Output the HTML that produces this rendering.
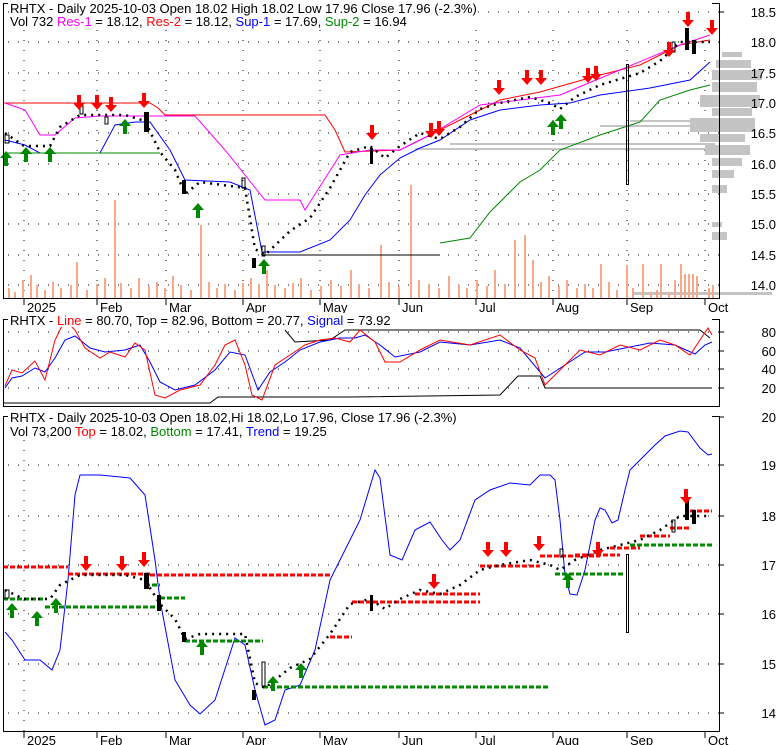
<!DOCTYPE html>
<html><head><meta charset="utf-8"><style>
html,body{margin:0;padding:0;background:#fff;width:780px;height:745px;overflow:hidden}
svg{display:block;font-family:"Liberation Sans",Arial,sans-serif}
</style></head><body>
<svg width="780" height="745" viewBox="0 0 780 745" xmlns="http://www.w3.org/2000/svg">
<defs>
<symbol id="dn" viewBox="0 0 12 16" overflow="visible"><path d="M4 0H8V8H12L6 15L0 8H4Z" fill="#f00"/></symbol>
<symbol id="up" viewBox="0 0 12 16" overflow="visible"><path d="M4 16H8V8H12L6 1L0 8H4Z" fill="#080"/></symbol>
</defs>
<g font-size="13" fill="#000">
<g stroke="#000" stroke-dasharray="1,9" stroke-width="1">
<line x1="8" y1="12" x2="719" y2="12"/><line x1="8" y1="42" x2="719" y2="42"/><line x1="8" y1="73" x2="719" y2="73"/><line x1="8" y1="103" x2="719" y2="103"/><line x1="8" y1="133" x2="719" y2="133"/><line x1="8" y1="164" x2="719" y2="164"/><line x1="8" y1="194" x2="719" y2="194"/><line x1="8" y1="224" x2="719" y2="224"/><line x1="8" y1="255" x2="719" y2="255"/><line x1="8" y1="285" x2="719" y2="285"/>
<line x1="24" y1="30" x2="24" y2="298"/><line x1="97" y1="30" x2="97" y2="298"/><line x1="166" y1="30" x2="166" y2="298"/><line x1="243" y1="30" x2="243" y2="298"/><line x1="320" y1="30" x2="320" y2="298"/><line x1="399" y1="30" x2="399" y2="298"/><line x1="476" y1="30" x2="476" y2="298"/><line x1="553" y1="30" x2="553" y2="298"/><line x1="627" y1="30" x2="627" y2="298"/><line x1="705" y1="30" x2="705" y2="298"/>
</g>
<g fill="#c4c4c4">
<rect x="722" y="52" width="20" height="5"/><rect x="716" y="60" width="35" height="8"/><rect x="712" y="70" width="50" height="10"/><rect x="712" y="82" width="45" height="10"/><rect x="700" y="95" width="60" height="12"/><rect x="712" y="108" width="40" height="8"/><rect x="690" y="118" width="65" height="14"/><rect x="700" y="134" width="45" height="8"/><rect x="705" y="145" width="45" height="10"/><rect x="712" y="158" width="30" height="8"/><rect x="712" y="170" width="22" height="8"/><rect x="712" y="185" width="15" height="8"/>
<rect x="712" y="222" width="10" height="5"/><rect x="712" y="232" width="15" height="8"/>
<rect x="415" y="148" width="300" height="2"/><rect x="450" y="143" width="265" height="2"/><rect x="600" y="125" width="115" height="2"/><rect x="630" y="120" width="85" height="2"/>
<rect x="632" y="292" width="140" height="3"/>
</g>
<g fill="#f7a98a">
<rect x="8" y="288" width="2" height="10"/><rect x="14" y="292" width="2" height="6"/><rect x="22" y="280" width="2" height="18"/><rect x="30" y="275" width="2" height="23"/><rect x="36" y="285" width="2" height="13"/><rect x="44" y="290" width="2" height="8"/><rect x="52" y="282" width="2" height="16"/><rect x="60" y="288" width="2" height="10"/><rect x="70" y="285" width="2" height="13"/><rect x="76" y="262" width="2" height="36"/><rect x="86" y="290" width="2" height="8"/><rect x="96" y="284" width="2" height="14"/><rect x="104" y="278" width="2" height="20"/><rect x="114" y="200" width="2" height="98"/><rect x="120" y="283" width="2" height="15"/><rect x="130" y="288" width="2" height="10"/><rect x="138" y="278" width="2" height="20"/><rect x="148" y="286" width="2" height="12"/><rect x="156" y="282" width="2" height="16"/><rect x="164" y="288" width="2" height="10"/><rect x="172" y="276" width="2" height="22"/><rect x="180" y="285" width="2" height="13"/><rect x="190" y="290" width="2" height="8"/><rect x="200" y="225" width="2" height="73"/><rect x="208" y="282" width="2" height="16"/><rect x="216" y="288" width="2" height="10"/><rect x="224" y="284" width="2" height="14"/><rect x="234" y="290" width="2" height="8"/><rect x="242" y="283" width="2" height="15"/><rect x="250" y="278" width="2" height="20"/><rect x="258" y="284" width="2" height="14"/><rect x="266" y="270" width="2" height="28"/><rect x="274" y="285" width="2" height="13"/><rect x="284" y="288" width="2" height="10"/><rect x="292" y="283" width="2" height="15"/><rect x="300" y="278" width="2" height="20"/><rect x="310" y="290" width="2" height="8"/><rect x="320" y="286" width="2" height="12"/><rect x="330" y="280" width="2" height="18"/><rect x="340" y="286" width="2" height="12"/><rect x="350" y="270" width="2" height="28"/><rect x="358" y="284" width="2" height="14"/><rect x="368" y="288" width="2" height="10"/><rect x="380" y="245" width="2" height="53"/><rect x="388" y="282" width="2" height="16"/><rect x="398" y="286" width="2" height="12"/><rect x="410" y="185" width="2" height="113"/><rect x="418" y="280" width="2" height="18"/><rect x="428" y="284" width="2" height="14"/><rect x="438" y="288" width="2" height="10"/><rect x="448" y="276" width="2" height="22"/><rect x="458" y="285" width="2" height="13"/><rect x="466" y="288" width="2" height="10"/><rect x="476" y="280" width="2" height="18"/><rect x="486" y="286" width="2" height="12"/><rect x="494" y="270" width="2" height="28"/><rect x="504" y="284" width="2" height="14"/><rect x="514" y="240" width="2" height="58"/><rect x="524" y="235" width="2" height="63"/><rect x="532" y="260" width="2" height="38"/><rect x="540" y="282" width="2" height="16"/><rect x="548" y="276" width="2" height="22"/><rect x="558" y="286" width="2" height="12"/><rect x="566" y="280" width="2" height="18"/><rect x="576" y="288" width="2" height="10"/><rect x="584" y="284" width="2" height="14"/><rect x="592" y="288" width="2" height="10"/><rect x="600" y="264" width="2" height="34"/><rect x="608" y="282" width="2" height="16"/><rect x="616" y="290" width="2" height="8"/><rect x="626" y="265" width="2" height="33"/><rect x="632" y="288" width="2" height="10"/><rect x="642" y="264" width="2" height="34"/><rect x="650" y="292" width="2" height="6"/><rect x="656" y="290" width="2" height="8"/><rect x="660" y="264" width="2" height="34"/><rect x="668" y="292" width="2" height="6"/><rect x="674" y="280" width="2" height="18"/><rect x="680" y="264" width="2" height="34"/><rect x="684" y="274" width="2" height="24"/><rect x="688" y="274" width="2" height="24"/><rect x="692" y="274" width="2" height="24"/><rect x="696" y="276" width="2" height="22"/><rect x="708" y="288" width="2" height="10"/><rect x="712" y="285" width="2" height="13"/>
</g>
<polyline fill="none" stroke="#f00" stroke-width="1" points="3,103 150,103 158,108 165,115 325,115 335,130 345,152 400,150 420,140 460,120 500,100 540,92 600,75 640,65 680,45 710,40"/>
<polyline fill="none" stroke="#f0f" stroke-width="1" points="5,103 25,110 40,135 55,135 75,118 100,116 195,116 225,150 265,200 300,200 305,210 340,155 370,150 400,150 430,135 480,105 560,95 620,70 680,45 710,35"/>
<polyline fill="none" stroke="#00f" stroke-width="1" points="5,140 25,145 40,153 60,153 100,153 115,125 135,122 150,122 170,150 185,180 230,182 250,190 262,252 300,252 330,240 350,220 365,195 380,175 400,158 420,148 440,140 470,120 500,110 540,105 570,103 600,95 650,88 690,80 710,62"/>
<polyline fill="none" stroke="#080" stroke-width="1" points="5,153 160,153"/>
<polyline fill="none" stroke="#000" stroke-width="1" points="262,255 440,255"/>
<polyline fill="none" stroke="#080" stroke-width="1" points="440,243 470,238 490,212 520,182 540,170 560,150 600,135 640,122 660,100 690,90 710,85"/>
<polyline fill="none" stroke="#000" stroke-width="2.5" stroke-dasharray="2,5" points="5,133 24,146 50,146 60,127 80,115 100,115 125,115 145,121 160,152 175,170 185,194 200,182 245,188 255,249 265,255 290,231 310,218 330,188 350,152 370,146 385,158 400,146 420,133 440,139 460,127 480,109 500,103 530,97 550,103 560,109 575,97 600,85 620,79 640,73 660,61 680,42 695,42 710,42"/>
<g fill="#000"><rect x="144" y="112" width="5" height="20"/><rect x="182" y="180" width="4" height="14"/><rect x="252" y="258" width="4" height="10"/><rect x="370" y="148" width="3" height="16"/><rect x="685" y="28" width="4" height="22"/><rect x="692" y="40" width="4" height="14"/></g>
<g fill="none" stroke="#000"><rect x="626.5" y="64.5" width="2" height="120"/><rect x="5" y="135" width="4" height="8"/><rect x="80" y="106" width="3" height="8"/><rect x="105" y="117" width="3" height="7"/><rect x="242" y="178" width="3" height="10"/><rect x="262" y="246" width="3" height="10"/><rect x="672" y="42" width="3" height="10"/></g>
<use href="#dn" x="73" y="95" width="12" height="16"/><use href="#dn" x="91" y="95" width="12" height="16"/><use href="#dn" x="105" y="97" width="12" height="16"/><use href="#dn" x="138" y="93" width="12" height="16"/><use href="#dn" x="366" y="125" width="12" height="16"/><use href="#dn" x="425" y="123" width="12" height="16"/><use href="#dn" x="433" y="121" width="12" height="16"/><use href="#dn" x="493" y="80" width="12" height="16"/><use href="#dn" x="521" y="70" width="12" height="16"/><use href="#dn" x="535" y="70" width="12" height="16"/><use href="#dn" x="582" y="68" width="12" height="16"/><use href="#dn" x="590" y="66" width="12" height="16"/><use href="#dn" x="663" y="42" width="12" height="16"/><use href="#dn" x="682" y="12" width="12" height="16"/><use href="#dn" x="706" y="20" width="12" height="16"/>
<use href="#up" x="0" y="150" width="12" height="16"/><use href="#up" x="20" y="146" width="12" height="16"/><use href="#up" x="44" y="146" width="12" height="16"/><use href="#up" x="119" y="118" width="12" height="16"/><use href="#up" x="192" y="202" width="12" height="16"/><use href="#up" x="258" y="258" width="12" height="16"/><use href="#up" x="547" y="119" width="12" height="16"/><use href="#up" x="555" y="113" width="12" height="16"/>
<path d="M3.5 30V3.5H8 M3.5 30V298.5H719.5V3.5H712" fill="none" stroke="#000"/>
<line x1="719" y1="12" x2="724" y2="12" stroke="#000"/>
<g stroke="#000"><line x1="24" y1="298" x2="24" y2="305"/><line x1="97" y1="298" x2="97" y2="305"/><line x1="166" y1="298" x2="166" y2="305"/><line x1="243" y1="298" x2="243" y2="305"/><line x1="320" y1="298" x2="320" y2="305"/><line x1="399" y1="298" x2="399" y2="305"/><line x1="476" y1="298" x2="476" y2="305"/><line x1="553" y1="298" x2="553" y2="305"/><line x1="627" y1="298" x2="627" y2="305"/><line x1="705" y1="298" x2="705" y2="305"/></g>
<g><text x="27" y="312">2025</text><text x="100" y="312">Feb</text><text x="169" y="312">Mar</text><text x="246" y="312">Apr</text><text x="323" y="312">May</text><text x="402" y="312">Jun</text><text x="479" y="312">Jul</text><text x="556" y="312">Aug</text><text x="630" y="312">Sep</text><text x="708" y="312">Oct</text></g>
<g text-anchor="end"><text x="776" y="17">18.5</text><text x="776" y="47">18.0</text><text x="776" y="78">17.5</text><text x="776" y="108">17.0</text><text x="776" y="138">16.5</text><text x="776" y="169">16.0</text><text x="776" y="199">15.5</text><text x="776" y="229">15.0</text><text x="776" y="260">14.5</text><text x="776" y="290">14.0</text></g>
<rect x="9" y="1" width="450" height="14" fill="#fff"/>
<text x="10" y="13">RHTX - Daily 2025-10-03 Open 18.02  High 18.02  Low 17.96  Close 17.96 (-2.3%)</text>
<text x="10" y="26">Vol 732 <tspan fill="#f0f">Res-1</tspan> = 18.12, <tspan fill="#f00">Res-2</tspan> = 18.12, <tspan fill="#00f">Sup-1</tspan> = 17.69, <tspan fill="#080">Sup-2</tspan> = 16.94</text>

<g stroke="#000" stroke-dasharray="1,9"><line x1="8" y1="332" x2="719" y2="332"/><line x1="8" y1="351" x2="719" y2="351"/><line x1="8" y1="369" x2="719" y2="369"/><line x1="8" y1="388" x2="719" y2="388"/></g>
<polyline fill="none" stroke="#000" points="285,330 295,342 330,340 345,330 700,330 710,338"/>
<polyline fill="none" stroke="#000" points="3,403 210,403 218,397 350,397 500,395 518,376 540,376 545,388 712,388"/>
<polyline fill="none" stroke="#00f" points="5,388 12,378 22,376 35,368 45,372 55,358 65,340 75,336 90,348 105,352 125,350 140,345 150,362 160,382 175,390 195,385 215,370 230,352 245,355 258,390 270,372 285,362 300,350 320,342 340,338 355,338 365,335 380,345 395,357 420,352 440,342 470,345 500,340 520,348 545,378 565,365 585,352 605,352 625,348 650,343 675,345 695,354 705,345 712,342"/>
<polyline fill="none" stroke="#f00" points="5,386 12,370 22,373 35,361 45,380 55,340 65,320 75,330 85,348 100,358 110,352 125,357 135,343 145,350 155,395 165,398 180,390 200,385 215,365 225,345 235,340 245,365 252,395 262,400 275,365 290,355 305,345 320,340 335,338 350,342 360,330 375,342 385,362 400,362 420,350 440,340 470,345 500,335 520,350 535,358 545,385 560,370 580,350 600,355 620,345 640,350 660,340 675,345 690,355 700,340 708,328 712,335"/>
<path d="M3.5 330V319.5H8 M3.5 330V406.5H719.5V319.5H712" fill="none" stroke="#000"/>
<g stroke="#000"><line x1="719" y1="332" x2="724" y2="332"/><line x1="719" y1="351" x2="724" y2="351"/><line x1="719" y1="369" x2="724" y2="369"/><line x1="719" y1="388" x2="724" y2="388"/></g>
<g text-anchor="end"><text x="776" y="337">80</text><text x="776" y="356">60</text><text x="776" y="374">40</text><text x="776" y="393">20</text></g>
<rect x="9" y="313" width="360" height="14" fill="#fff"/>
<text x="10" y="325">RHTX - <tspan fill="#f00">Line</tspan> = 80.70, Top = 82.96, Bottom = 20.77, <tspan fill="#00f">Signal</tspan> = 73.92</text>

<g stroke="#000" stroke-dasharray="1,9"><line x1="8" y1="465" x2="719" y2="465"/><line x1="8" y1="516" x2="719" y2="516"/><line x1="8" y1="565" x2="719" y2="565"/><line x1="8" y1="614" x2="719" y2="614"/><line x1="8" y1="664" x2="719" y2="664"/><line x1="8" y1="713" x2="719" y2="713"/><line x1="24" y1="440" x2="24" y2="731"/></g>
<polyline fill="none" stroke="#00f" points="5,632 12,640 25,660 40,660 52,670 60,650 68,580 75,495 80,475 100,475 130,478 145,495 155,560 160,600 175,680 190,705 200,714 215,700 235,638 245,645 255,690 265,725 275,720 285,690 300,685 315,650 330,580 345,550 360,520 375,470 380,478 390,555 402,560 415,530 430,522 442,540 450,550 460,540 475,500 490,490 510,483 530,485 540,475 550,475 555,480 560,520 565,575 570,594 577,595 585,570 595,520 600,508 605,510 612,523 618,520 625,490 630,470 640,460 655,445 665,436 680,431 688,432 700,448 708,455 712,454"/>
<g fill="none" stroke-width="3" stroke-dasharray="5,2">
<line x1="3" y1="567" x2="68" y2="567" stroke="#f00"/><line x1="68" y1="574" x2="150" y2="574" stroke="#f00"/><line x1="150" y1="575" x2="330" y2="575" stroke="#f00"/><line x1="330" y1="637" x2="352" y2="637" stroke="#f00"/><line x1="352" y1="602" x2="480" y2="602" stroke="#f00"/><line x1="415" y1="594" x2="480" y2="594" stroke="#f00"/><line x1="480" y1="566" x2="540" y2="566" stroke="#f00"/><line x1="540" y1="556" x2="600" y2="556" stroke="#f00"/><line x1="575" y1="555" x2="620" y2="555" stroke="#f00"/><line x1="610" y1="548" x2="640" y2="548" stroke="#f00"/><line x1="640" y1="536" x2="670" y2="536" stroke="#f00"/><line x1="670" y1="528" x2="690" y2="528" stroke="#f00"/><line x1="690" y1="511" x2="712" y2="511" stroke="#f00"/>
<line x1="3" y1="599" x2="45" y2="599" stroke="#080"/><line x1="45" y1="607" x2="160" y2="607" stroke="#080"/><line x1="145" y1="585" x2="160" y2="585" stroke="#080"/><line x1="160" y1="598" x2="185" y2="598" stroke="#080"/><line x1="185" y1="641" x2="263" y2="641" stroke="#080"/><line x1="263" y1="687" x2="550" y2="687" stroke="#080"/><line x1="555" y1="574" x2="625" y2="574" stroke="#080"/><line x1="630" y1="545" x2="712" y2="545" stroke="#080"/>
</g>
<polyline fill="none" stroke="#000" stroke-width="2.5" stroke-dasharray="2,5" points="5,590 24,599 50,599 60,585 80,575 100,575 125,575 145,580 160,604 175,619 185,639 200,634 245,634 255,683 265,688 290,668 310,659 330,634 350,604 370,599 385,609 400,599 420,590 440,594 460,585 480,570 500,565 530,560 550,565 560,570 575,560 600,550 620,545 640,540 660,530 680,516 695,516 710,516"/>
<g fill="#000"><rect x="144" y="573" width="5" height="16"/><rect x="157" y="595" width="4" height="16"/><rect x="182" y="632" width="4" height="10"/><rect x="252" y="690" width="4" height="10"/><rect x="370" y="595" width="3" height="16"/><rect x="685" y="500" width="4" height="20"/><rect x="692" y="510" width="4" height="14"/></g>
<g fill="none" stroke="#000"><rect x="626.5" y="554.5" width="2" height="78"/><rect x="5" y="590" width="4" height="8"/><rect x="262" y="662" width="3" height="24"/><rect x="672" y="520" width="3" height="12"/><rect x="560" y="549" width="3" height="8"/></g>
<use href="#dn" x="80" y="556" width="12" height="16"/><use href="#dn" x="116" y="556" width="12" height="16"/><use href="#dn" x="138" y="552" width="12" height="16"/><use href="#dn" x="428" y="574" width="12" height="16"/><use href="#dn" x="482" y="542" width="12" height="16"/><use href="#dn" x="500" y="542" width="12" height="16"/><use href="#dn" x="533" y="536" width="12" height="16"/><use href="#dn" x="592" y="542" width="12" height="16"/><use href="#dn" x="680" y="489" width="12" height="16"/>
<use href="#up" x="6" y="602" width="12" height="16"/><use href="#up" x="31" y="610" width="12" height="16"/><use href="#up" x="50" y="597" width="12" height="16"/><use href="#up" x="196" y="639" width="12" height="16"/><use href="#up" x="267" y="675" width="12" height="16"/><use href="#up" x="295" y="662" width="12" height="16"/><use href="#up" x="562" y="572" width="12" height="16"/>
<path d="M3.5 440V416.5H8 M3.5 440V731.5H719.5V416.5H712" fill="none" stroke="#000"/>
<g stroke="#000"><line x1="719" y1="417" x2="724" y2="417"/><line x1="719" y1="465" x2="724" y2="465"/><line x1="719" y1="516" x2="724" y2="516"/><line x1="719" y1="565" x2="724" y2="565"/><line x1="719" y1="614" x2="724" y2="614"/><line x1="719" y1="664" x2="724" y2="664"/><line x1="719" y1="713" x2="724" y2="713"/></g>
<g text-anchor="end"><text x="776" y="422">20</text><text x="776" y="470">19</text><text x="776" y="521">18</text><text x="776" y="570">17</text><text x="776" y="619">16</text><text x="776" y="669">15</text><text x="776" y="718">14</text></g>
<g stroke="#000"><line x1="24" y1="731" x2="24" y2="738"/><line x1="97" y1="731" x2="97" y2="738"/><line x1="166" y1="731" x2="166" y2="738"/><line x1="243" y1="731" x2="243" y2="738"/><line x1="320" y1="731" x2="320" y2="738"/><line x1="399" y1="731" x2="399" y2="738"/><line x1="476" y1="731" x2="476" y2="738"/><line x1="553" y1="731" x2="553" y2="738"/><line x1="627" y1="731" x2="627" y2="738"/><line x1="705" y1="731" x2="705" y2="738"/></g>
<g><text x="27" y="745">2025</text><text x="100" y="745">Feb</text><text x="169" y="745">Mar</text><text x="246" y="745">Apr</text><text x="323" y="745">May</text><text x="402" y="745">Jun</text><text x="479" y="745">Jul</text><text x="556" y="745">Aug</text><text x="630" y="745">Sep</text><text x="708" y="745">Oct</text></g>
<rect x="9" y="410" width="455" height="14" fill="#fff"/>
<text x="10" y="422">RHTX - Daily 2025-10-03 Open 18.02,Hi 18.02,Lo 17.96, Close 17.96 (-2.3%)</text>
<text x="10" y="436">Vol 73,200 <tspan fill="#f00">Top</tspan> = 18.02, <tspan fill="#080">Bottom</tspan> = 17.41, <tspan fill="#00f">Trend</tspan> = 19.25</text>
</g>
</svg>
</body></html>
